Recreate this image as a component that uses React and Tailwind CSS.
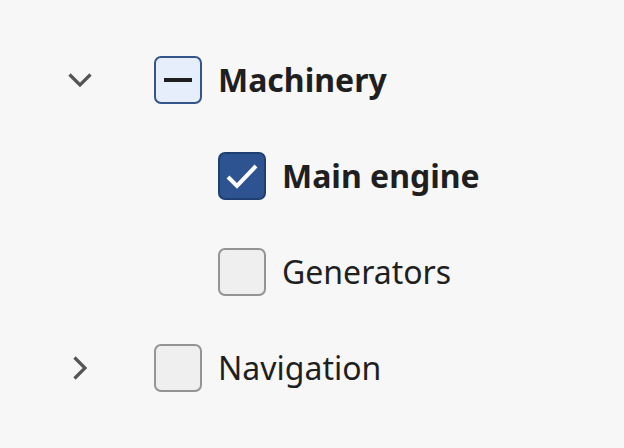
import React from 'react';

const font = { fontFamily: '"Noto Sans", "Open Sans", sans-serif' };

const ChevronDown = () => (
  <svg width="28" height="18" viewBox="0 0 28 18" className="text-[#555]">
    <path d="M3.5 3.5 L14 14 L24.5 3.5" fill="none" stroke="currentColor" strokeWidth="3.2" />
  </svg>
);

const ChevronRight = () => (
  <svg width="18" height="28" viewBox="0 0 18 28" className="text-[#555]">
    <path d="M3.5 3.5 L14 14 L3.5 24.5" fill="none" stroke="currentColor" strokeWidth="3.2" />
  </svg>
);

const Box = ({ state }) => {
  if (state === 'checked') {
    return (
      <span className="w-[48px] h-[48px] rounded-[7px] border-2 border-[#1f3f73] bg-[#2d5391] flex items-center justify-center">
        <svg width="36" height="28" viewBox="0 0 36 28">
          <path d="M4 15 L13 24 L32 4" fill="none" stroke="white" strokeWidth="4" />
        </svg>
      </span>
    );
  }
  if (state === 'mixed') {
    return (
      <span className="w-[48px] h-[48px] rounded-[7px] border-2 border-[#33558c] bg-[#e7eefb] flex items-center justify-center">
        <span className="block w-[28px] h-[4px] bg-[#1f1f1f]" />
      </span>
    );
  }
  return <span className="block w-[48px] h-[48px] rounded-[7px] border-2 border-[#949494] bg-[#efefef]" />;
};

const Row = ({ level, toggle, state, label, bold }) => (
  <div className="h-[96px] flex items-center">
    <div className="w-[48px] ml-[56px] flex items-center justify-center">
      {toggle === 'open' && <ChevronDown />}
      {toggle === 'closed' && <ChevronRight />}
    </div>
    <div className={level === 2 ? 'ml-[114px]' : 'ml-[50px]'}>
      <Box state={state} />
    </div>
    <span className={`ml-[16px] text-[32px] leading-none text-[#1f1f1f] ${bold ? 'font-bold' : 'font-normal'}`}>
      {label}
    </span>
  </div>
);

export default function App() {
  return (
    <div className="w-[624px] h-[448px] bg-[#f7f7f7] pt-[32px]" style={font}>
      <Row level={1} toggle="open" state="mixed" label="Machinery" bold />
      <Row level={2} state="checked" label="Main engine" bold />
      <Row level={2} state="empty" label="Generators" />
      <Row level={1} toggle="closed" state="empty" label="Navigation" />
    </div>
  );
}
